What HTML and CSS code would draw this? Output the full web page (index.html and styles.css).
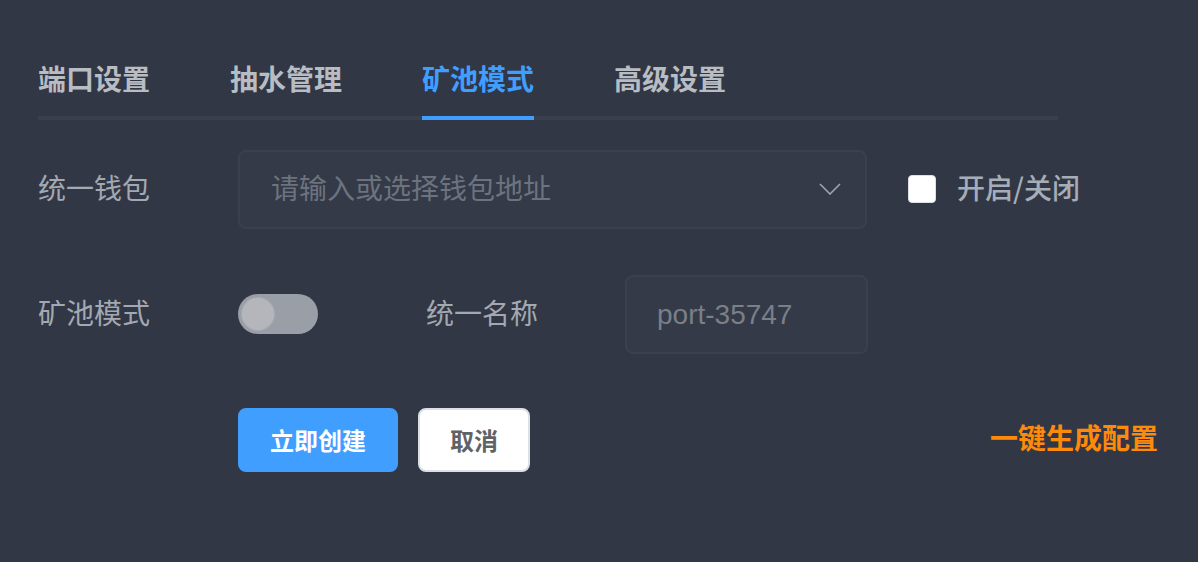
FILE: index.html
```html
<!DOCTYPE html>
<html lang="zh-CN">
<head>
    <meta charset="UTF-8">
    <meta name="viewport" content="width=device-width, initial-scale=1.0">
    <title>矿池模式</title>
    <link rel="stylesheet" href="styles.css">
</head>
<body>
    <div class="panel">
        <div class="tabs">
            <div class="tab">端口设置</div>
            <div class="tab">抽水管理</div>
            <div class="tab active">矿池模式</div>
            <div class="tab">高级设置</div>
        </div>

        <div class="form">
            <div class="row">
                <div class="label">统一钱包</div>
                <div class="select">
                    <span class="placeholder">请输入或选择钱包地址</span>
                    <svg class="arrow" width="22" height="12" viewBox="0 0 22 12">
                        <path d="M1 1 L11 11 L21 1" fill="none" stroke="#a0a5ad" stroke-width="1.6"/>
                    </svg>
                </div>
                <label class="check">
                    <span class="box"></span>
                    <span class="check-text">开启/关闭</span>
                </label>
            </div>

            <div class="row">
                <div class="label">矿池模式</div>
                <div class="switch-cell">
                    <span class="switch"><span class="knob"></span></span>
                </div>
                <div class="label">统一名称</div>
                <div class="input">port-35747</div>
            </div>

            <div class="row actions">
                <div class="label"></div>
                <button class="btn primary">立即创建</button>
                <button class="btn">取消</button>
                <a class="quick">一键生成配置</a>
            </div>
        </div>
    </div>
</body>
</html>
```

FILE: styles.css
```css
* {
    margin: 0;
    padding: 0;
    box-sizing: border-box;
}

body {
    background: #313745;
    font-family: "Noto Sans CJK SC", "Liberation Sans", sans-serif;
    width: 1198px;
    height: 562px;
    overflow: hidden;
}

.panel {
    padding: 40px 40px 0 38px;
}

/* 标签页 */
.tabs {
    display: flex;
    width: 1020px;
    height: 80px;
    border-bottom: 4px solid #393f4c;
}

.tab {
    height: 80px;
    margin-bottom: -4px;
    line-height: 76px;
    font-size: 28px;
    font-weight: 700;
    color: #b8bcc3;
    margin-right: 80px;
    border-bottom: 4px solid transparent;
}

.tab.active {
    color: #409eff;
    border-bottom-color: #409eff;
}

/* 表单 */
.form {
    padding-top: 29px;
}

.row {
    display: flex;
    align-items: center;
    height: 80px;
    margin-bottom: 45px;
}

.label {
    width: 200px;
    flex-shrink: 0;
    font-size: 28px;
    color: #a3a9b2;
    line-height: 40px;
    padding-bottom: 4px;
}

.select {
    width: 629px;
    height: 79px;
    border: 2px solid #3a414e;
    border-radius: 8px;
    background: #343a48;
    display: flex;
    align-items: center;
    padding: 0 24px 0 31px;
}

.placeholder {
    flex: 1;
    font-size: 28px;
    color: #6d737e;
    line-height: 40px;
    padding-bottom: 4px;
}

.arrow {
    display: block;
}

.check {
    display: flex;
    align-items: center;
    margin-left: 41px;
}

.box {
    width: 28px;
    height: 28px;
    background: #fff;
    border: 1px solid #dcdfe6;
    border-radius: 4px;
}

.check-text {
    margin-left: 21px;
    font-size: 28px;
    font-weight: 500;
    color: #a5adb7;
    line-height: 40px;
    padding-bottom: 4px;
}

.switch-cell {
    width: 188px;
    flex-shrink: 0;
}

.switch {
    display: block;
    width: 80px;
    height: 40px;
    border-radius: 20px;
    background: #9a9ea6;
    padding: 4px;
}

.knob {
    display: block;
    width: 32px;
    height: 32px;
    border-radius: 50%;
    background: #b4b6bb;
    box-shadow: 0 0 0 1px #a7aab0;
}

.input {
    width: 243px;
    height: 79px;
    margin-left: -1px;
    border: 2px solid #3a414e;
    border-radius: 8px;
    background: #343a48;
    padding-left: 30px;
    font-family: "Liberation Sans", Arial, sans-serif;
    font-size: 28px;
    color: #7a7f88;
    line-height: 75px;
}

.actions {
    height: 64px;
    margin-top: 54px;
}

.actions .label {
    width: 200px;
}

.btn {
    height: 64px;
    padding: 0 32px;
    border: 2px solid #dcdfe6;
    border-radius: 8px;
    background: #fff;
    color: #606266;
    font-family: "Noto Sans CJK SC", sans-serif;
    font-size: 24px;
    font-weight: 700;
    margin-right: 20px;
    line-height: 58px;
}

.btn.primary {
    background: #409eff;
    border-color: #409eff;
    color: #fff;
    width: 160px;
    padding: 0;
}

.btn + .btn {
    width: 112px;
    padding: 0;
}

.quick {
    margin-left: auto;
    font-size: 28px;
    font-weight: 700;
    color: #fd8a0b;
    line-height: 40px;
    padding-bottom: 6px;
}
```
